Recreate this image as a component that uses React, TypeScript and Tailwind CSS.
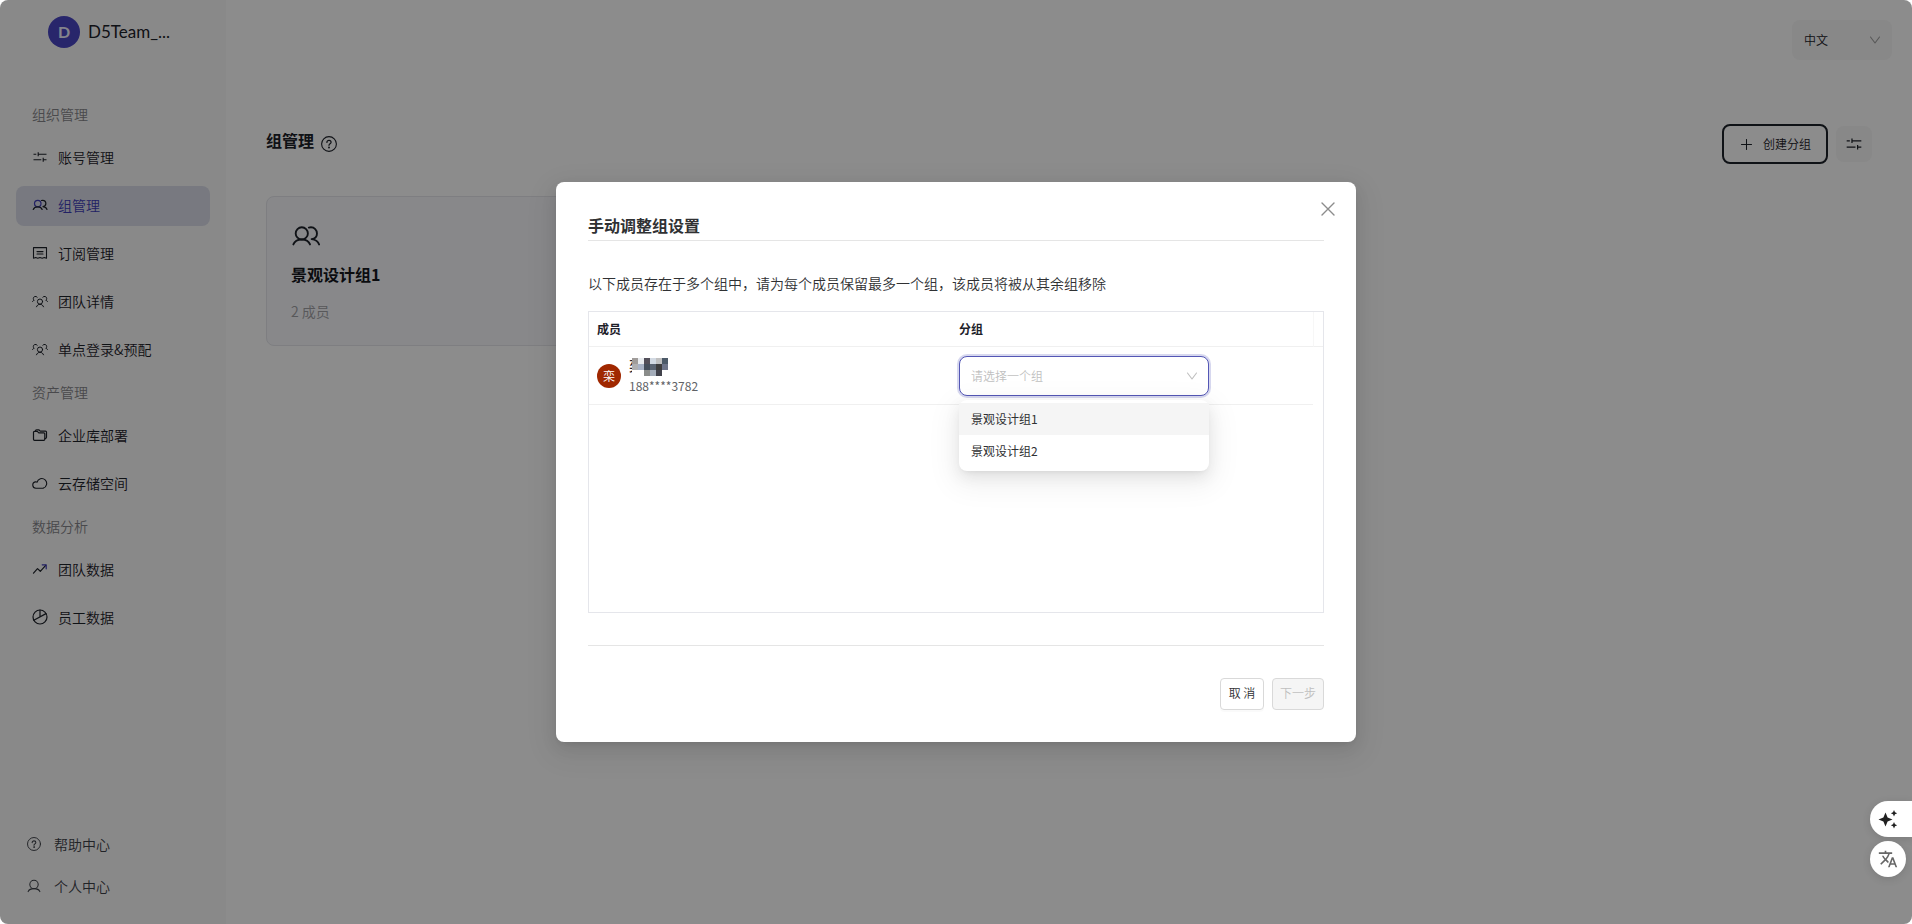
import React, { useState } from 'react';
import clsx from 'clsx';

type IconProps = { className?: string };

const stroke = {
  fill: 'none',
  stroke: 'currentColor',
  strokeLinecap: 'round' as const,
  strokeLinejoin: 'round' as const,
};

const SlidersIcon: React.FC<IconProps> = ({ className }) => (
  <svg viewBox="0 0 16 16" className={className} {...stroke} strokeLinecap="butt" strokeWidth={1.1}>
    <path d="M1.5 5.2h2.8M6.2 5.2h8.3M6.2 3.2v4M1.5 10.8h7.8M11.2 10.8h3.3M11.2 8.8v4" />
  </svg>
);

const GroupIcon: React.FC<IconProps> = ({ className }) => (
  <svg viewBox="0 0 32 32" className={className} {...stroke} strokeWidth={2}>
    <circle cx="11.5" cy="13.2" r="6.5" />
    <path d="M2.5 25c1.2-3.2 4.6-5.3 9-5.3s7.6 2.1 8.8 5.3" className="text-[#1d2129]" />
    <path
      d="M19 7c1-.3 1.5-.3 2.3-.3 3.6 0 6.4 2.9 6.4 6.5 0 3.4-2.4 5.7-5.7 6.2 4 .6 7 2.6 8 5.6"
      className="text-[#1d2129]"
    />
  </svg>
);

const TeamIcon: React.FC<IconProps> = ({ className }) => (
  <svg viewBox="0 0 16 16" className={className} {...stroke} strokeWidth={1}>
    <circle cx="8" cy="8.6" r="2.6" />
    <path d="M4.5 13.8c.6-1.6 1.8-2.5 3.5-2.5s2.9.9 3.5 2.5" />
    <path d="M5.2 4.2a2.2 2.2 0 0 0-3.9 1.4c0 .8.3 1.3.9 1.7-.9.2-1.4.6-1.7 1.3" />
    <path d="M10.8 4.2a2.2 2.2 0 0 1 3.9 1.4c0 .8-.3 1.3-.9 1.7.9.2 1.4.6 1.7 1.3" />
  </svg>
);

const BillIcon: React.FC<IconProps> = ({ className }) => (
  <svg viewBox="0 0 16 16" className={className} {...stroke} strokeWidth={1.1}>
    <path d="M1.5 2.6h13v10.6l-2.2-.7-2.1.7-2.2-.7-2.2.7-2.1-.7-2.2.7z" />
    <path d="M5 6.6h6M5 9h6" />
  </svg>
);

const FolderIcon: React.FC<IconProps> = ({ className }) => (
  <svg viewBox="0 0 16 16" className={className} {...stroke} strokeWidth={1.2}>
    <path d="M1.5 5.3c0-.6.4-1 1-1h2.8l1.5 1.5h5c.6 0 1 .4 1 1v5.5c0 .6-.4 1-1 1H2.5c-.6 0-1-.4-1-1z" />
    <path d="M3.5 4.2v-.4c0-.6.4-1 1-1h2.3l1.4 1.3h5.3c.6 0 1 .4 1 1v5.2c0 .6-.4 1.1-1.5 1.3" />
  </svg>
);

const CloudIcon: React.FC<IconProps> = ({ className }) => (
  <svg viewBox="0 0 16 16" className={className} {...stroke} strokeWidth={1.1}>
    <path d="M3.9 13.2a3.2 3.2 0 0 1-.7-6.3c.5-.1 1-.1 1.5.1M5 7.3a4.900 4.900 0 1 1 6.200 5.800c-.4.1-.8.1-1.2.1H3.900" />
  </svg>
);

const TrendIcon: React.FC<IconProps> = ({ className }) => (
  <svg viewBox="0 0 16 16" className={className} {...stroke} strokeWidth={1.2}>
    <path d="M1.5 12.2l4-4.6 2.8 2.7 5.4-6" />
    <path d="M10.2 3.8h4v4" className="text-[#3f3cb8]" />
  </svg>
);

const PieIcon: React.FC<IconProps> = ({ className }) => (
  <svg viewBox="0 0 16 16" className={className} {...stroke} strokeWidth={1.2}>
    <circle cx="8" cy="8" r="7" />
    <path d="M8 1v7M1.8 11.2L14 4.6" />
  </svg>
);

const QuestionIcon: React.FC<IconProps> = ({ className }) => (
  <svg viewBox="0 0 16 16" className={className} {...stroke} strokeWidth={1.1}>
    <circle cx="8" cy="8" r="7.4" />
    <path d="M5.9 6.4c0-1.2.9-2 2.1-2s2.1.8 2.1 1.9c0 1.5-2.1 1.5-2.1 3" strokeWidth={1.2} />
    <circle cx="8" cy="11.5" r=".4" fill="currentColor" />
  </svg>
);

const UserIcon: React.FC<IconProps> = ({ className }) => (
  <svg viewBox="0 0 16 16" className={className} {...stroke} strokeWidth={1.2}>
    <circle cx="8" cy="6.3" r="4.8" />
    <path d="M1.3 14.4c.9-2.2 3.300-3.400 6.700-3.400s5.800 1.200 6.700 3.400" />
  </svg>
);

const ChevronIcon: React.FC<IconProps> = ({ className }) => (
  <svg viewBox="0 0 12 12" className={className} {...stroke} strokeWidth={1.1}>
    <path d="M1.5 3L6 9l4.5-6" />
  </svg>
);

const PlusIcon: React.FC<IconProps> = ({ className }) => (
  <svg viewBox="0 0 12 12" className={className} {...stroke} strokeWidth={1.1}>
    <path d="M6 .5v11M.5 6h11" />
  </svg>
);

const CloseIcon: React.FC<IconProps> = ({ className }) => (
  <svg viewBox="0 0 14 14" className={className} {...stroke} strokeWidth={1.4}>
    <path d="M1 1l12 12M13 1L1 13" />
  </svg>
);

const SparkleIcon: React.FC<IconProps> = ({ className }) => (
  <svg viewBox="0 0 20 20" className={className} fill="currentColor">
    <path d="M7.5 3.5l2.1 4.9 4.9 2.1-4.9 2.1-2.1 4.9-2.1-4.9L.5 10.5l4.900-2.100z" />
    <path d="M16 1l1 2.2 2.2 1-2.2 1-1 2.2-1-2.2-2.2-1 2.2-1z" />
    <path d="M16 13l1 2.2 2.2 1-2.2 1-1 2.2-1-2.2-2.2-1 2.2-1z" />
  </svg>
);

const TranslateIcon: React.FC<IconProps> = ({ className }) => (
  <svg viewBox="0 0 24 24" className={className} fill="currentColor">
    <path d="M12.87 15.07l-2.54-2.51.03-.03A17.52 17.52 0 0 0 14.07 6H17V4h-7V2H8v2H1v1.99h11.17C11.5 7.92 10.44 9.75 9 11.35 8.07 10.32 7.3 9.19 6.69 8h-2c.73 1.63 1.73 3.17 2.98 4.56l-5.09 5.02L4 19l5-5 3.11 3.11.76-2.04zM18.5 10h-2L12 22h2l1.12-3h4.75L21 22h2l-4.5-12zm-2.62 7l1.62-4.33L19.12 17h-3.24z" />
  </svg>
);

const MENU = [
  {
    title: '组织管理',
    items: [
      { label: '账号管理', Icon: SlidersIcon },
      { label: '组管理', Icon: GroupIcon },
      { label: '订阅管理', Icon: BillIcon },
      { label: '团队详情', Icon: TeamIcon },
      { label: '单点登录&预配', Icon: TeamIcon },
    ],
  },
  {
    title: '资产管理',
    items: [
      { label: '企业库部署', Icon: FolderIcon },
      { label: '云存储空间', Icon: CloudIcon },
    ],
  },
  {
    title: '数据分析',
    items: [
      { label: '团队数据', Icon: TrendIcon },
      { label: '员工数据', Icon: PieIcon },
    ],
  },
];

const GROUPS = ['景观设计组1', '景观设计组2'];

// Blocks hiding the member's name, 6px each
const MASK = [
  ['#a09c9a', '#e9ecf0', '#534f5a', '#d2d9e2', '#c0c0c0', '#4c5a68'],
  ['#b0b0b2', '#a8b2c6', '#444e5c', '#5a6370', '#3d3c3c', '#6d7489'],
  ['#ffffff', '#ffffff', '#8a8c8a', '#a4adba', '#41424b', '#ffffff'],
];

const Sidebar: React.FC = () => {
  const [active, setActive] = useState('组管理');

  return (
    <aside className="flex w-[226px] shrink-0 flex-col bg-[#fafafa] text-sm font-[350] text-[#1d2129]">
      <div className="flex h-24 items-start gap-2 pt-4 pl-12">
        <span className="flex size-8 items-center justify-center rounded-full bg-[#4a46c4] font-['Lato'] text-base font-bold text-[#f0f0ff]">
          D
        </span>
        <span className="font-['Lato',sans-serif] text-[17px] leading-8 font-normal">D5Team_...</span>
      </div>

      <nav>
        {MENU.map((section) => (
          <section key={section.title} className="flex flex-col">
            <h2 className="h-[38px] pl-8 leading-9 text-[#86868a]">{section.title}</h2>
            {section.items.map(({ label, Icon }) => (
              <button
                key={label}
                onClick={() => setActive(label)}
                className={clsx(
                  'mx-4 my-1 flex h-10 items-center gap-[10px] rounded-lg pb-0.5 pl-4',
                  active === label && 'bg-[#dadde9] text-[#3f3cb8]'
                )}
              >
                <Icon className={clsx('size-4', Icon === GroupIcon && 'stroke-[2.4]')} />
                {label}
              </button>
            ))}
          </section>
        ))}
      </nav>

      <div className="mt-auto mb-[17px] flex flex-col pl-[27px] text-[#3d4148]">
        <a href="#help" className="flex h-[42px] items-center gap-[13px]">
          <QuestionIcon className="size-[14px]" />
          帮助中心
        </a>
        <a href="#profile" className="flex h-[42px] items-center gap-[13px]">
          <UserIcon className="size-[14px]" />
          个人中心
        </a>
      </div>
    </aside>
  );
};

const GroupPage: React.FC = () => (
  <main className="flex min-w-0 flex-1 flex-col text-[#1d2129]">
    <div className="flex justify-end pt-5 pr-5">
      <div className="relative h-10 w-[100px]">
        <select
          aria-label="语言"
          defaultValue="zh"
          className="size-full appearance-none rounded-lg bg-[#f7f7f7] px-3 text-xs font-[350]"
        >
          <option value="zh">中文</option>
          <option value="en">English</option>
        </select>
        <ChevronIcon className="pointer-events-none absolute top-[14px] right-[11px] size-3 text-[#a0a0a0]" />
      </div>
    </div>

    <div className="mt-16 flex h-10 items-center justify-between px-10">
      <div className="flex items-end gap-[7px] pb-1">
        <h1 className="pb-1 text-base leading-6 font-semibold">组管理</h1>
        <QuestionIcon className="mb-1 size-4" />
      </div>
      <div className="flex items-center gap-2">
        <button className="flex h-10 w-[106px] items-center justify-center gap-[11px] rounded-lg border-2 border-[#1d2129] pl-0.5 text-xs font-[350]">
          <PlusIcon className="size-[11px]" />
          创建分组
        </button>
        <button
          aria-label="设置"
          className="flex size-9 items-center justify-center rounded-lg bg-[#f7f7f7]"
        >
          <SlidersIcon className="size-[18px]" />
        </button>
      </div>
    </div>

    <div className="mt-8 px-10">
      <article className="h-[150px] w-[400px] rounded-lg border border-[#e5e6eb] bg-[#f7f8fc] px-6 pt-6">
        <GroupIcon className="size-[30px]" />
        <h3 className="mt-[11px] text-base leading-6 font-semibold text-[#14161c]">{GROUPS[0]}</h3>
        <p className="mt-[15px] text-sm leading-5 font-[350] text-[#a0a0a4]">2 成员</p>
      </article>
    </div>
  </main>
);

const GroupSelect: React.FC = () => {
  const [value, setValue] = useState('');

  return (
    <div className="relative h-10 w-[250px]">
      <select
        aria-label="分组"
        value={value}
        onChange={(e) => setValue(e.target.value)}
        className="size-full appearance-none rounded-lg border border-[#5457b5] bg-white px-[11px] text-xs text-[#bfbfbf] shadow-[0_0_0_2px_rgba(74,76,180,0.22)] outline-none"
      >
        <option value="">请选择一个组</option>
        {GROUPS.map((g) => (
          <option key={g}>{g}</option>
        ))}
      </select>
      <ChevronIcon className="pointer-events-none absolute top-[14px] right-[11px] size-3 text-[#bfbfbf]" />
      <ul
        role="listbox"
        className="absolute top-11 left-0 w-full rounded-lg bg-white pt-[3px] pb-1 text-xs font-normal text-[#303133] shadow-[0_6px_16px_rgba(0,0,0,0.08),0_3px_6px_-4px_rgba(0,0,0,0.12),0_9px_28px_8px_rgba(0,0,0,0.05)]"
      >
        {GROUPS.map((g, i) => (
          <li
            key={g}
            role="option"
            aria-selected={value === g}
            onClick={() => setValue(g)}
            className={clsx('h-8 px-3 leading-8', i === 0 && 'bg-[#f5f5f5]')}
          >
            {g}
          </li>
        ))}
      </ul>
    </div>
  );
};

const AdjustModal: React.FC = () => (
  <div
    role="dialog"
    aria-labelledby="adjust-title"
    className="relative flex min-h-[560px] w-[800px] flex-col rounded-lg bg-white px-8 pt-[31px] pb-8 font-[350] text-[#303133] shadow-[0_6px_16px_rgba(0,0,0,0.08),0_3px_6px_-4px_rgba(0,0,0,0.12),0_9px_28px_8px_rgba(0,0,0,0.05)]"
  >
    <button aria-label="关闭" className="absolute top-5 right-[21px] text-[#8c8c8c]">
      <CloseIcon className="size-[14px]" />
    </button>
    <h2
      id="adjust-title"
      className="border-b border-[#e5e5e5] pb-[3px] text-base leading-6 font-semibold"
    >
      手动调整组设置
    </h2>
    <p className="mt-[31px] text-sm leading-[22px]">
      以下成员存在于多个组中，请为每个成员保留最多一个组，该成员将被从其余组移除
    </p>

    <div className="mt-[17px] h-[302px] border border-[#e5e6eb] text-xs">
      <table className="w-full table-fixed border-separate border-spacing-0 text-left">
        <thead>
          <tr className="h-[35px] text-[#1d2129]">
            <th className="border-b border-[#f0f0f0] p-0 px-2 font-semibold">成员</th>
            <th className="border-b border-[#f0f0f0] p-0 px-2 font-semibold">分组</th>
            <th className="w-[10px] border-b border-l border-[#f0f0f0] border-l-[#f7f7f7] p-0" />
          </tr>
        </thead>
        <tbody>
          <tr className="h-[58px]">
            <td className="border-b border-[#f0f0f0] p-0 px-2">
              <div className="flex items-center gap-2">
                <span className="flex size-6 items-center justify-center rounded-full bg-[#a02800] text-xs text-white">
                  栾
                </span>
                <div>
                  <div className="relative h-5 text-sm leading-[18px] font-medium text-[#1d2129]">
                    栾
                    <div className="absolute top-0.5 left-[3px] grid grid-cols-6">
                      {MASK.flat().map((color, i) => (
                        <i key={i} className="size-[6px]" style={{ backgroundColor: color }} />
                      ))}
                    </div>
                  </div>
                  <div className="leading-5 font-normal text-[#606266]">188****3782</div>
                </div>
              </div>
            </td>
            <td className="border-b border-[#f0f0f0] p-0 px-2">
              <GroupSelect />
            </td>
            <td />
          </tr>
        </tbody>
      </table>
    </div>

    <div className="mt-8 flex justify-end gap-2 border-t border-[#e5e5e5] pt-8 text-xs">
      <button className="h-8 w-11 rounded border border-[#d9d9d9] pb-0.5 shadow-[0_2px_0_rgba(0,0,0,0.02)]">
        取 消
      </button>
      <button
        disabled
        className="h-8 w-[52px] rounded border border-[#d9d9d9] bg-[#f5f5f5] pb-0.5 text-[#bfbfbf]"
      >
        下一步
      </button>
    </div>
  </div>
);

const App: React.FC = () => {
  return (
    <div className="min-h-screen bg-white font-['Noto_Sans_CJK_SC',sans-serif]">
      <div className="relative flex min-h-screen overflow-hidden rounded-lg">
        <Sidebar />
        <GroupPage />
        <div className="absolute inset-0 flex items-center justify-center bg-black/45">
          <AdjustModal />
        </div>
      </div>

      {/* Floating assistant buttons */}
      <div className="fixed right-0 bottom-[47px] flex flex-col gap-1">
        <button
          aria-label="助手"
          className="flex h-9 w-[42px] items-center rounded-l-full bg-white pl-2 text-[#202020] shadow-[0_2px_8px_rgba(0,0,0,0.12)]"
        >
          <SparkleIcon className="size-5" />
        </button>
        <button
          aria-label="翻译"
          className="flex size-9 items-center justify-center rounded-full bg-white text-[#666666] shadow-[0_2px_8px_rgba(0,0,0,0.12)]"
        >
          <TranslateIcon className="size-5" />
        </button>
      </div>
    </div>
  );
};

export default App;
